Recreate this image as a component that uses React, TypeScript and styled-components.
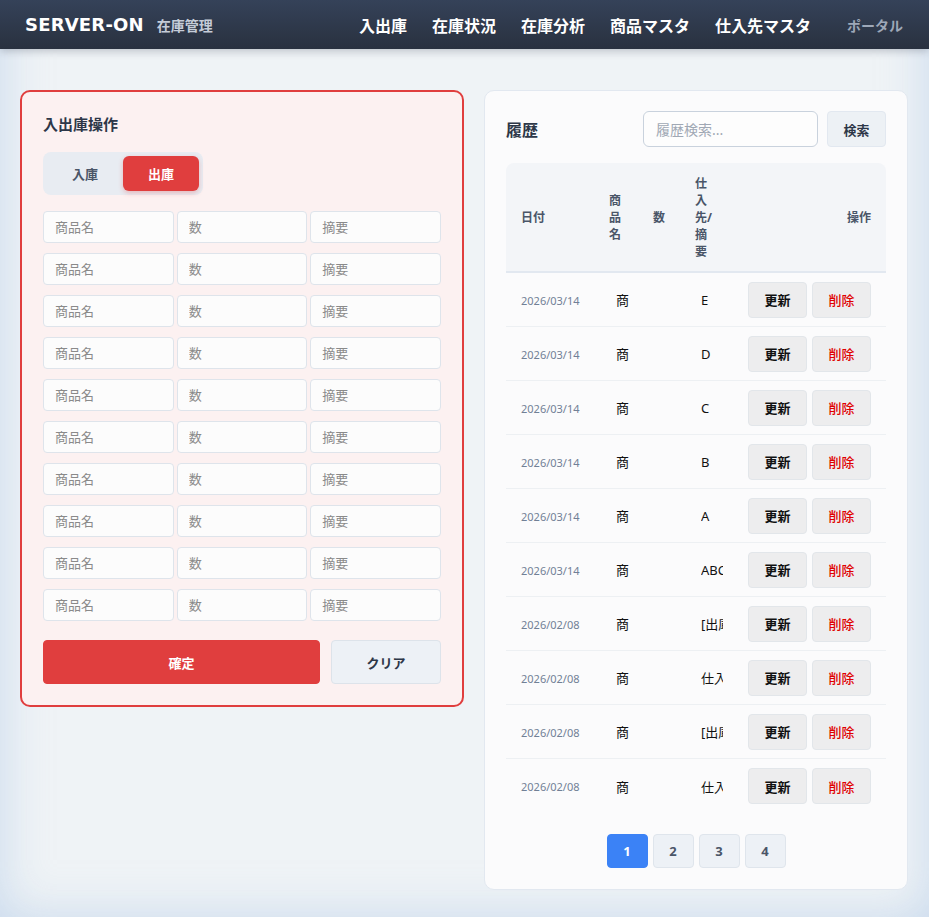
import React, { useState } from 'react'
import styled, { createGlobalStyle, css } from 'styled-components'

const GlobalStyle = createGlobalStyle`
  html, body {
    margin: 0;
    padding: 0;
    background: #eff3f6;
  }
  body {
    font-family: "Noto Sans", "Noto Sans CJK JP", sans-serif;
    color: #2d3748;
    min-height: 917px;
    box-shadow: inset 0 0 48px rgba(170, 196, 230, 0.55);
  }
  * {
    box-sizing: border-box;
  }
`

const Page = styled.div`
  min-height: 917px;
`

const Header = styled.header`
  height: 49px;
  display: flex;
  align-items: center;
  justify-content: space-between;
  padding: 0 26px 0 25px;
  background: linear-gradient(180deg, #354259 0%, #29313f 100%);
  box-shadow: 0 2px 8px rgba(30, 41, 59, 0.25);
`

const Brand = styled.div`
  display: flex;
  align-items: baseline;
  gap: 13px;
`

const Logo = styled.span`
  font-family: "DejaVu Sans", "Noto Sans", sans-serif;
  font-weight: 700;
  font-size: 18px;
  color: #ffffff;
  letter-spacing: 0.2px;
`

const SubTitle = styled.span`
  font-size: 14px;
  font-weight: 700;
  color: #c5ccd8;
`

const Nav = styled.nav`
  display: flex;
  align-items: center;
  gap: 25px;
`

const NavItem = styled.a<{ $muted?: boolean }>`
  font-size: 16px;
  font-weight: 700;
  color: #ffffff;
  text-decoration: none;
  cursor: pointer;
  ${({ $muted }) =>
    $muted &&
    css`
      font-size: 14px;
      color: #9ea8b8;
      margin-left: 11px;
    `}
`

const Main = styled.main`
  display: grid;
  grid-template-columns: 444px 1fr;
  gap: 20px;
  align-items: start;
  padding: 41px 21px 20px 20px;
`

const OpCard = styled.section`
  background: #fcf1f1;
  border: 2px solid #e03e3e;
  border-radius: 10px;
  padding: 22px 21px 21px 21px;
`

const CardTitle = styled.h2`
  margin: 0;
  font-size: 15px;
  font-weight: 700;
  color: #2d3748;
  line-height: 20px;
`

const Toggle = styled.div`
  display: inline-flex;
  margin-top: 18px;
  padding: 4px;
  background: #e8ecf2;
  border-radius: 8px;
`

const ToggleButton = styled.button<{ $active?: boolean }>`
  width: 76px;
  height: 35px;
  border: none;
  border-radius: 6px;
  font-family: inherit;
  font-size: 13px;
  font-weight: 700;
  cursor: pointer;
  background: ${({ $active }) => ($active ? '#e03e3e' : 'transparent')};
  color: ${({ $active }) => ($active ? '#ffffff' : '#4a5568')};
  box-shadow: ${({ $active }) => ($active ? '0 2px 5px rgba(224, 62, 62, 0.3)' : 'none')};
`

const InputGrid = styled.div`
  display: grid;
  grid-template-columns: repeat(3, 1fr);
  column-gap: 3px;
  row-gap: 10px;
  margin-top: 16px;
`

const Field = styled.input`
  height: 32px;
  width: 100%;
  padding: 0 11px;
  border: 1px solid #dee4eb;
  border-radius: 4px;
  background: #fcfcfc;
  font-family: inherit;
  font-size: 13px;
  color: #2d3748;
  &::placeholder {
    color: #8a8a8a;
  }
`

const Actions = styled.div`
  display: grid;
  grid-template-columns: 1fr 110px;
  gap: 11px;
  margin-top: 19px;
`

const ActionButton = styled.button<{ $primary?: boolean }>`
  height: 44px;
  border-radius: 4px;
  font-family: inherit;
  font-size: 13px;
  font-weight: 700;
  cursor: pointer;
  border: 1px solid ${({ $primary }) => ($primary ? '#e03e3e' : '#dde3ea')};
  background: ${({ $primary }) => ($primary ? '#e03e3e' : '#edf1f6')};
  color: ${({ $primary }) => ($primary ? '#ffffff' : '#2d3748')};
`

const HistoryCard = styled.section`
  background: #fbfbfc;
  border: 1px solid #e2e8f0;
  border-radius: 10px;
  padding: 20px 21px 21px 21px;
`

const HistoryHead = styled.div`
  display: flex;
  align-items: center;
  gap: 9px;
`

const HistoryTitle = styled.h2`
  margin: 0 auto 0 0;
  font-size: 16px;
  font-weight: 700;
  color: #2d3748;
`

const Search = styled.input`
  width: 175px;
  height: 36px;
  padding: 0 12px;
  border: 1px solid #c9d2dd;
  border-radius: 6px;
  background: #fdfdfd;
  font-family: inherit;
  font-size: 14px;
  &::placeholder {
    color: #a0a8b4;
  }
`

const SearchButton = styled.button`
  width: 59px;
  height: 36px;
  border: 1px solid #e2e8f0;
  border-radius: 4px;
  background: #edf1f5;
  font-family: inherit;
  font-size: 13px;
  font-weight: 700;
  color: #2d3748;
  cursor: pointer;
`

const Table = styled.table`
  width: 100%;
  margin-top: 16px;
  border-collapse: separate;
  border-spacing: 0;
  table-layout: fixed;
`

const HeadCell = styled.th<{ $align?: 'left' | 'right'; $padRight?: number }>`
  background: #f3f5f8;
  border-bottom: 2px solid #e2e8f0;
  padding: 12px ${({ $padRight }) => $padRight ?? 12}px 11px 12px;
  text-align: ${({ $align }) => $align ?? 'left'};
  font-size: 12px;
  font-weight: 700;
  line-height: 17px;
  color: #4a5568;
  vertical-align: middle;
  &:first-child {
    padding-left: 15px;
    border-top-left-radius: 8px;
  }
  &:last-child {
    padding-right: 15px;
    border-top-right-radius: 8px;
  }
`

const Row = styled.tr`
  &:not(:last-child) td {
    border-bottom: 1px solid #edf0f3;
  }
`

const Cell = styled.td<{ $padLeft?: number; $align?: 'left' | 'right' }>`
  height: 54px;
  padding: 0 12px 0 ${({ $padLeft }) => $padLeft ?? 12}px;
  text-align: ${({ $align }) => $align ?? 'left'};
  vertical-align: middle;
  font-size: 13px;
  color: #111111;
  &:last-child {
    padding-right: 15px;
    white-space: nowrap;
  }
`

const DateText = styled.span`
  font-size: 11px;
  color: #718096;
  white-space: nowrap;
`

const Clip = styled.div`
  overflow: hidden;
  white-space: nowrap;
`

const RowButton = styled.button<{ $danger?: boolean }>`
  width: 59px;
  height: 36px;
  margin-left: ${({ $danger }) => ($danger ? 5 : 0)}px;
  border: 1px solid #e2e6ea;
  border-radius: 4px;
  background: #ededee;
  font-family: inherit;
  font-size: 13px;
  font-weight: ${({ $danger }) => ($danger ? 500 : 700)};
  color: ${({ $danger }) => ($danger ? '#e00000' : '#111111')};
  cursor: pointer;
  vertical-align: middle;
`

const Pager = styled.div`
  display: flex;
  justify-content: center;
  gap: 5px;
  margin-top: 21px;
`

const PageButton = styled.button<{ $active?: boolean }>`
  width: 41px;
  height: 34px;
  border-radius: 4px;
  font-family: inherit;
  font-size: 13px;
  font-weight: 700;
  cursor: pointer;
  border: 1px solid ${({ $active }) => ($active ? '#3b82f6' : '#dfe5ec')};
  background: ${({ $active }) => ($active ? '#3b82f6' : '#edf1f6')};
  color: ${({ $active }) => ($active ? '#ffffff' : '#4a5568')};
`

const navItems = ['入出庫', '在庫状況', '在庫分析', '商品マスタ', '仕入先マスタ']

const history = [
  { date: '2026/03/14', item: '商品E', memo: 'E' },
  { date: '2026/03/14', item: '商品D', memo: 'D' },
  { date: '2026/03/14', item: '商品C', memo: 'C' },
  { date: '2026/03/14', item: '商品B', memo: 'B' },
  { date: '2026/03/14', item: '商品A', memo: 'A' },
  { date: '2026/03/14', item: '商品ABC', memo: 'ABC' },
  { date: '2026/02/08', item: '商品X', memo: '[出庫] 在庫調整' },
  { date: '2026/02/08', item: '商品X', memo: '仕入先A' },
  { date: '2026/02/08', item: '商品Y', memo: '[出庫] 在庫調整' },
  { date: '2026/02/08', item: '商品Y', memo: '仕入先B' },
]

export default function App() {
  const [mode, setMode] = useState<'in' | 'out'>('out')
  const rows = Array.from({ length: 10 }, (_, i) => i)

  return (
    <Page>
      <GlobalStyle />
      <Header>
        <Brand>
          <Logo>SERVER-ON</Logo>
          <SubTitle>在庫管理</SubTitle>
        </Brand>
        <Nav>
          {navItems.map((n) => (
            <NavItem key={n}>{n}</NavItem>
          ))}
          <NavItem $muted>ポータル</NavItem>
        </Nav>
      </Header>

      <Main>
        <OpCard>
          <CardTitle>入出庫操作</CardTitle>
          <Toggle>
            <ToggleButton $active={mode === 'in'} onClick={() => setMode('in')}>
              入庫
            </ToggleButton>
            <ToggleButton $active={mode === 'out'} onClick={() => setMode('out')}>
              出庫
            </ToggleButton>
          </Toggle>
          <InputGrid>
            {rows.map((i) => (
              <React.Fragment key={i}>
                <Field placeholder="商品名" />
                <Field placeholder="数" />
                <Field placeholder="摘要" />
              </React.Fragment>
            ))}
          </InputGrid>
          <Actions>
            <ActionButton $primary>確定</ActionButton>
            <ActionButton>クリア</ActionButton>
          </Actions>
        </OpCard>

        <HistoryCard>
          <HistoryHead>
            <HistoryTitle>履歴</HistoryTitle>
            <Search placeholder="履歴検索..." />
            <SearchButton>検索</SearchButton>
          </HistoryHead>
          <Table>
            <colgroup>
              <col style={{ width: 91 }} />
              <col style={{ width: 44 }} />
              <col style={{ width: 42 }} />
              <col style={{ width: 52 }} />
              <col />
            </colgroup>
            <thead>
              <tr>
                <HeadCell>日付</HeadCell>
                <HeadCell>商品名</HeadCell>
                <HeadCell>数</HeadCell>
                <HeadCell $padRight={18}>仕入先/摘要</HeadCell>
                <HeadCell $align="right">操作</HeadCell>
              </tr>
            </thead>
            <tbody>
              {history.map((h, i) => (
                <Row key={i}>
                  <Cell $padLeft={15}>
                    <DateText>{h.date}</DateText>
                  </Cell>
                  <Cell $padLeft={19}>
                    <Clip>{h.item}</Clip>
                  </Cell>
                  <Cell />
                  <Cell $padLeft={18}>
                    <Clip>{h.memo}</Clip>
                  </Cell>
                  <Cell $align="right" $padLeft={0}>
                    <RowButton>更新</RowButton>
                    <RowButton $danger>削除</RowButton>
                  </Cell>
                </Row>
              ))}
            </tbody>
          </Table>
          <Pager>
            {[1, 2, 3, 4].map((p) => (
              <PageButton key={p} $active={p === 1}>
                {p}
              </PageButton>
            ))}
          </Pager>
        </HistoryCard>
      </Main>
    </Page>
  )
}
